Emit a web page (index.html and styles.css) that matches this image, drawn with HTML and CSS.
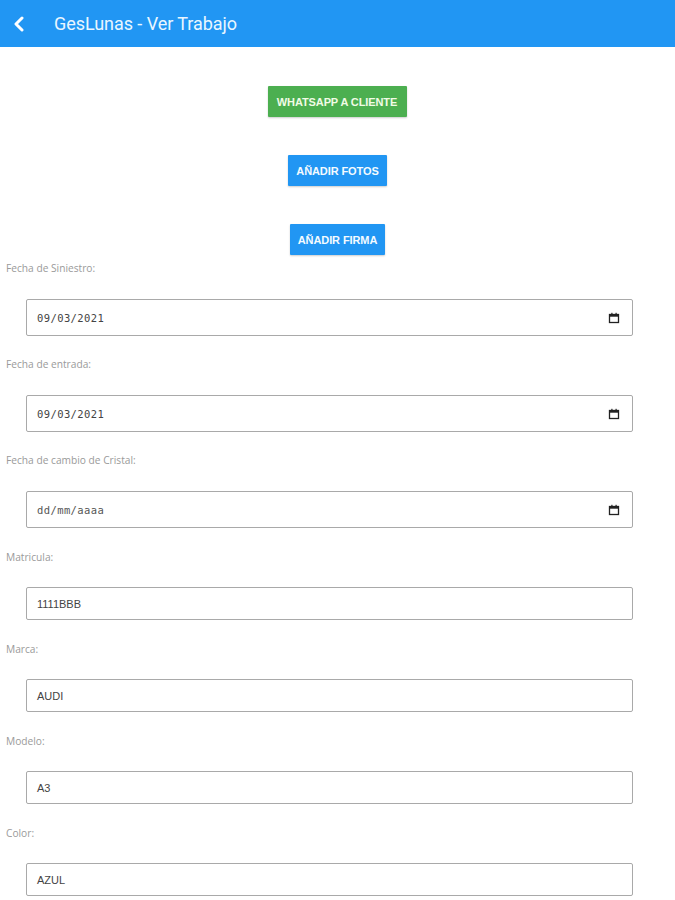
FILE: index.html
```html
<!DOCTYPE html>
<html lang="es">
<head>
<meta charset="utf-8">
<title>GesLunas - Ver Trabajo</title>
<link rel="stylesheet" href="styles.css">
</head>
<body>
<header class="topbar">
  <svg class="back" width="12" height="16" viewBox="0 0 12 16"><path d="M9 2 L3 8 L9 14" fill="none" stroke="#fff" stroke-width="3" stroke-linecap="round" stroke-linejoin="round"/></svg>
  <h1 class="title">GesLunas - Ver Trabajo</h1>
</header>
<main class="content">
  <div class="actions">
    <button class="btn btn-green">WHATSAPP A CLIENTE</button>
    <button class="btn btn-blue">AÑADIR FOTOS</button>
    <button class="btn btn-blue">AÑADIR FIRMA</button>
  </div>
  <div class="form">
    <div class="field">
      <label class="label">Fecha de Siniestro:</label>
      <div class="input date"><span class="date-text">09/03/2021</span><svg class="cal" width="12" height="12" viewBox="0 0 12 12"><rect x="1.5" y="2.5" width="9" height="8" fill="none" stroke="#222" stroke-width="1.3"/><rect x="1.5" y="2.5" width="9" height="2.2" fill="#222"/><rect x="3.3" y="0.8" width="1.2" height="2" fill="#222"/><rect x="7.5" y="0.8" width="1.2" height="2" fill="#222"/></svg></div>
    </div>
    <div class="field">
      <label class="label">Fecha de entrada:</label>
      <div class="input date"><span class="date-text">09/03/2021</span><svg class="cal" width="12" height="12" viewBox="0 0 12 12"><rect x="1.5" y="2.5" width="9" height="8" fill="none" stroke="#222" stroke-width="1.3"/><rect x="1.5" y="2.5" width="9" height="2.2" fill="#222"/><rect x="3.3" y="0.8" width="1.2" height="2" fill="#222"/><rect x="7.5" y="0.8" width="1.2" height="2" fill="#222"/></svg></div>
    </div>
    <div class="field">
      <label class="label">Fecha de cambio de Cristal:</label>
      <div class="input date"><span class="date-text placeholder">dd/mm/aaaa</span><svg class="cal" width="12" height="12" viewBox="0 0 12 12"><rect x="1.5" y="2.5" width="9" height="8" fill="none" stroke="#222" stroke-width="1.3"/><rect x="1.5" y="2.5" width="9" height="2.2" fill="#222"/><rect x="3.3" y="0.8" width="1.2" height="2" fill="#222"/><rect x="7.5" y="0.8" width="1.2" height="2" fill="#222"/></svg></div>
    </div>
    <div class="field">
      <label class="label">Matricula:</label>
      <div class="input text">1111BBB</div>
    </div>
    <div class="field">
      <label class="label">Marca:</label>
      <div class="input text">AUDI</div>
    </div>
    <div class="field">
      <label class="label">Modelo:</label>
      <div class="input text">A3</div>
    </div>
    <div class="field">
      <label class="label">Color:</label>
      <div class="input text">AZUL</div>
    </div>
  </div>
</main>
</body>
</html>
```

FILE: styles.css
```css
* { box-sizing: border-box; }
html, body { margin: 0; padding: 0; background: #fff; }
body { font-family: Roboto, "Liberation Sans", Arial, sans-serif; overflow: hidden; }

.topbar {
  height: 47px;
  background: #2196f3;
  display: flex;
  align-items: center;
  padding-left: 13px;
}
.back { display: block; margin-top: 1px; }
.title {
  margin: 0 0 0 29px;
  font-size: 18px;
  font-weight: 400;
  color: #e9f6ff;
  letter-spacing: -0.05px;
}

.actions {
  display: flex;
  flex-direction: column;
  align-items: center;
  gap: 38px;
  padding-top: 39px;
}
.btn {
  border: none;
  height: 31px;
  font-family: "Liberation Sans", Arial, sans-serif;
  font-size: 11px;
  font-weight: 700;
  letter-spacing: -0.1px;
  color: #f4fbff;
  border-radius: 1px;
  box-shadow: 0 1px 2px rgba(0,0,0,0.2);
  padding: 0;
}
.btn-green { background: #4caf50; width: 139px; margin-left: -1px; color: #f1fbe6; }
.btn-blue { background: #2196f3; width: 99px; }
.actions .btn-blue:last-child { width: 95px; }

.form { padding-top: 6px; }
.field { display: flex; flex-direction: column; }
.label {
  margin-left: 6px;
  height: 14px;
  line-height: 14px;
  font-size: 10.2px;
  color: #9a9a9a;
  font-family: "Open Sans", "Liberation Sans", sans-serif;
}
.input {
  margin-left: 26px;
  width: 607px;
  border: 1.5px solid #a9a9a9;
  border-radius: 2px;
  display: flex;
  align-items: center;
  color: #444;
}
.input.date {
  height: 37px;
  margin-top: 24px;
  margin-bottom: 21px;
  padding: 0 12px 0 10px;
  justify-content: space-between;
}
.input.text {
  height: 33px;
  margin-top: 23px;
  margin-bottom: 22px;
  padding-left: 10px;
  font-size: 11px;
  font-family: "Liberation Sans", Arial, sans-serif;
}
.field:nth-child(3) .input.date { margin-bottom: 22px; }
.date-text {
  font-family: "DejaVu Sans Mono", "Liberation Mono", monospace;
  font-size: 10.5px;
  letter-spacing: 0.4px;
  color: #444;
}
.date-text.placeholder { color: #555; }
.cal { display: block; }
```
